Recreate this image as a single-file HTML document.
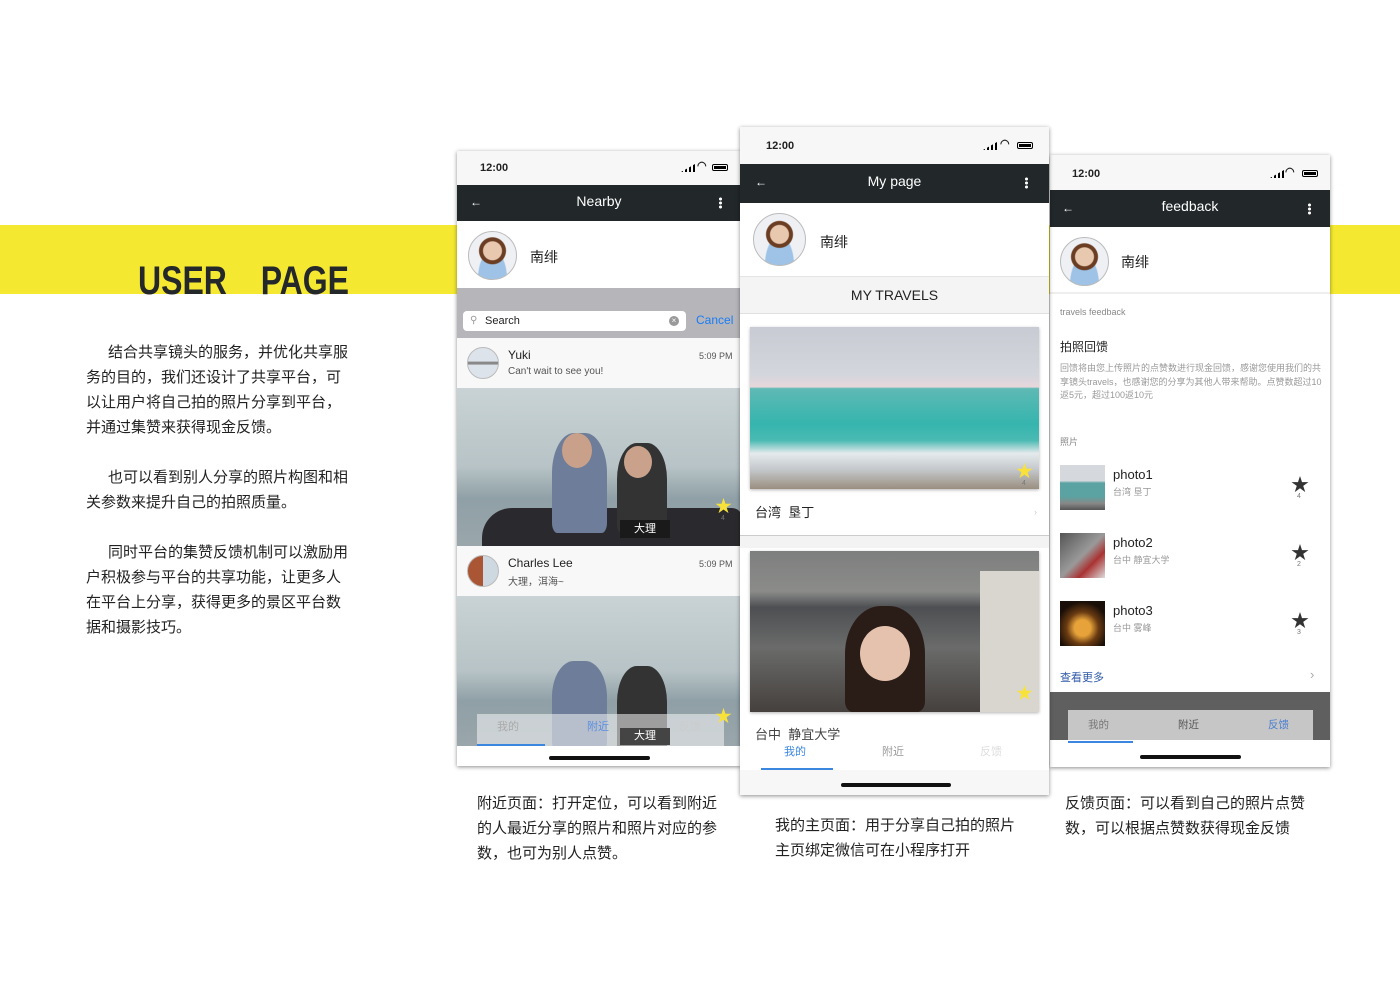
<!DOCTYPE html>
<html><head><meta charset="utf-8"><style>
*{margin:0;padding:0;box-sizing:border-box}
body{width:1400px;height:990px;background:#fff;position:relative;overflow:hidden;font-family:"Liberation Sans","Noto Sans CJK SC",sans-serif;color:#222}
.a{position:absolute}
.band{left:0;top:225px;width:1400px;height:69px;background:#f4e930}
.title{left:138px;top:259px;font:bold 40px "Liberation Sans",sans-serif;color:#25282b;white-space:nowrap;word-spacing:10px;transform:scaleX(0.8);transform-origin:left}
.intro{left:86px;width:263px;font-size:15px;line-height:25px;color:#222}
.intro p{text-indent:22px;margin-bottom:25px}
.cap{font-size:15px;line-height:25px;color:#222}
.phone{background:#fff;box-shadow:0 1px 4px rgba(0,0,0,.45);overflow:hidden}
.sb{left:0;width:100%;background:#f7f7f7;font-weight:bold;font-size:11px}
.nav{left:0;width:100%;background:#22272a;color:#fff;font-size:14px;text-align:center}
.dots{width:3px;height:12px;background:radial-gradient(circle,#fff 1.4px,transparent 1.6px) 0 0/3px 4px}
.av{border-radius:50%;border:1px solid #bbb;background:radial-gradient(circle at 50% 40%,#e8c9b0 0 9px,#6b3d22 10px 13px,transparent 14px),radial-gradient(ellipse at 50% 100%,#9ec3e6 0 14px,transparent 15px),#eef0f4}
.star{color:#f8e23a;font-size:17px;line-height:17px}
.bstar{color:#333;font-size:18px}
.small{font-size:7px;color:#777}
.bars{width:14px;height:8px;background:linear-gradient(90deg,#000 0 2px,transparent 2px 4px,#000 4px 6px,transparent 6px 8px,#000 8px 10px,transparent 10px 12px,#000 12px 14px);clip-path:polygon(0 100%,100% 0,100% 100%)}
.bat{width:16px;height:7px;border:1px solid #000;border-radius:2px;background:#000;background-clip:content-box;padding:1px}
.hb{height:4px;background:#111;border-radius:2px}
.photo{background:linear-gradient(180deg,#c9d3d5 0%,#b7c3c6 50%,#8fa0a6 70%,#9aa6ab 100%)}
</style></head><body>
<div class="a band"></div>
<div class="a title">USER &nbsp;PAGE</div>
<div class="a intro" style="top:340px">
<p>结合共享镜头的服务，并优化共享服务的目的，我们还设计了共享平台，可以让用户将自己拍的照片分享到平台，并通过集赞来获得现金反馈。</p>
<p>也可以看到别人分享的照片构图和相关参数来提升自己的拍照质量。</p>
<p>同时平台的集赞反馈机制可以激励用户积极参与平台的共享功能，让更多人在平台上分享，获得更多的景区平台数据和摄影技巧。</p>
</div>

<!-- Phone 1 -->
<div class="a phone" style="left:457px;top:151px;width:284px;height:615px">
 <div class="a sb" style="top:0;height:34px"><span class="a" style="left:23px;top:11px">12:00</span><div class="a bars" style="left:224px;top:13px"></div><span class="a" style="left:240px;top:8px;font-size:11px">&#x25E0;</span><div class="a bat" style="left:255px;top:13px"></div></div>
 <div class="a nav" style="top:34px;height:36px;line-height:32px">Nearby<span class="a" style="left:13px;top:1px;font-size:12px">&#8592;</span><div class="a dots" style="left:262px;top:12px"></div></div>
 <div class="a av" style="left:11px;top:80px;width:49px;height:49px"></div>
 <div class="a" style="left:73px;top:96px;font-size:14px">南绯</div>
 <div class="a" style="left:0;top:137px;width:284px;height:50px;background:#b6b6ba"></div>
 <div class="a" style="left:6px;top:160px;width:223px;height:20px;background:#fff;border-radius:4px;font-size:11px;line-height:20px;padding-left:22px">Search<span class="a" style="left:7px;top:0;color:#999;font-size:10px">&#9906;</span><span class="a" style="left:206px;top:5px;width:10px;height:10px;border-radius:50%;background:#999;color:#fff;font-size:8px;line-height:10px;text-align:center">×</span></div>
 <div class="a" style="left:239px;top:162px;font-size:12px;color:#1a7cf5">Cancel</div>
 <div class="a" style="left:0;top:187px;width:284px;height:50px;background:#f8f8f8"></div>
 <div class="a av" style="left:10px;top:196px;width:32px;height:32px;background:linear-gradient(#dde3ea 45%,#888 46% 55%,#dde3ea 56%)"></div>
 <div class="a" style="left:51px;top:197px;font-size:12px">Yuki</div>
 <div class="a" style="left:51px;top:215px;font-size:10px;color:#555">Can't wait to see you!</div>
 <div class="a" style="left:242px;top:200px;font-size:9px;color:#555">5:09 PM</div>
 <div class="a photo" style="left:0;top:237px;width:284px;height:158px"><div class="a" style="left:25px;top:120px;width:260px;height:38px;background:#2a2a2e;border-radius:30px 10px 0 0"></div><div class="a" style="left:95px;top:45px;width:55px;height:100px;background:#6d7d9a;border-radius:40% 40% 10% 10%"></div><div class="a" style="left:160px;top:55px;width:50px;height:90px;background:#333;border-radius:40% 40% 10% 10%"></div><div class="a" style="left:105px;top:45px;width:30px;height:35px;background:#c9a08a;border-radius:50%"></div><div class="a" style="left:167px;top:58px;width:28px;height:32px;background:#caa28c;border-radius:50%"></div></div>
 <div class="a" style="left:163px;top:369px;width:50px;height:18px;background:#1a1a1a;color:#fff;font-size:11px;line-height:18px;text-align:center">大理</div>
 <div class="a star" style="left:258px;top:347px">★</div><div class="a small" style="left:264px;top:364px">4</div>
 <div class="a" style="left:0;top:395px;width:284px;height:50px;background:#f8f8f8"></div>
 <div class="a av" style="left:10px;top:404px;width:32px;height:32px;background:linear-gradient(90deg,#a53 0 50%,#cdd8e0 50%)"></div>
 <div class="a" style="left:51px;top:405px;font-size:12px">Charles Lee</div>
 <div class="a" style="left:51px;top:422px;font-size:10px;color:#555">大理，洱海~</div>
 <div class="a" style="left:242px;top:408px;font-size:9px;color:#555">5:09 PM</div>
 <div class="a photo" style="left:0;top:445px;width:284px;height:150px"><div class="a" style="left:95px;top:65px;width:55px;height:90px;background:#6d7d9a;border-radius:40% 40% 10% 10%"></div><div class="a" style="left:160px;top:70px;width:50px;height:90px;background:#333;border-radius:40% 40% 10% 10%"></div></div>
 <div class="a" style="left:20px;top:563px;width:247px;height:32px;background:rgba(245,245,245,.55);font-size:11px;line-height:26px"><span class="a" style="left:20px;color:#aaa">我的</span><span class="a" style="left:110px;color:#5a8fe0">附近</span><span class="a" style="left:202px;color:#ccc">反馈</span><div class="a" style="left:0;bottom:0;width:68px;height:2px;background:#3b87e0"></div></div>
 <div class="a" style="left:163px;top:577px;width:50px;height:17px;background:#444;color:#fff;font-size:11px;line-height:17px;text-align:center">大理</div>
 <div class="a star" style="left:258px;top:557px">★</div>
 <div class="a" style="left:0;top:595px;width:284px;height:20px;background:#fff"></div>
 <div class="a hb" style="left:92px;top:605px;width:101px"></div>
</div>

<!-- Phone 2 -->
<div class="a phone" style="left:740px;top:127px;width:309px;height:668px;z-index:2">
 <div class="a sb" style="top:0;height:37px"><span class="a" style="left:26px;top:13px">12:00</span><div class="a bars" style="left:243px;top:15px"></div><span class="a" style="left:260px;top:10px">&#x25E0;</span><div class="a bat" style="left:277px;top:15px"></div></div>
 <div class="a nav" style="top:37px;height:39px;line-height:34px">My page<span class="a" style="left:15px;top:1px;font-size:12px">&#8592;</span><div class="a dots" style="left:285px;top:13px"></div></div>
 <div class="a av" style="left:13px;top:86px;width:53px;height:53px"></div>
 <div class="a" style="left:80px;top:105px;font-size:14px">南绯</div>
 <div class="a" style="left:0;top:149px;width:309px;height:38px;background:#f4f4f4;border-top:1px solid #e4e4e4;border-bottom:1px solid #e0e0e0;text-align:center;font-size:14px;line-height:36px">MY TRAVELS</div>
 <div class="a" style="left:10px;top:200px;width:289px;height:162px;background:linear-gradient(180deg,#c8cbd3 0%,#d4d6dd 30%,#e8d7db 37%,#5fb9b4 38%,#35b5ae 60%,#4bbab3 70%,#e5eaed 78%,#c4c8cb 88%,#9a8e80 100%);box-shadow:0 1px 3px rgba(0,0,0,.3)"></div>
 <div class="a star" style="left:276px;top:336px">★</div><div class="a small" style="left:282px;top:353px">4</div>
 <div class="a" style="left:0;top:362px;width:309px;height:47px;border-bottom:1px solid #ccc;font-size:13px;line-height:47px;padding-left:15px">台湾&nbsp;&nbsp;垦丁<span class="a" style="right:12px;top:0;color:#ccc;font-size:9px">›</span></div>
 <div class="a" style="left:0;top:409px;width:309px;height:12px;background:#f3f3f3"></div>
 <div class="a" style="left:10px;top:424px;width:289px;height:161px;background:linear-gradient(180deg,#7d7f7e 0%,#8b8c8a 25%,#4d4f52 35%,#6a6b6a 60%,#45403d 100%);box-shadow:0 1px 3px rgba(0,0,0,.3)"><div class="a" style="left:95px;top:55px;width:80px;height:106px;background:#2a1c17;border-radius:45% 45% 10% 10%"></div><div class="a" style="left:110px;top:75px;width:50px;height:55px;background:#e5c2ae;border-radius:50%"></div><div class="a" style="left:230px;top:20px;width:59px;height:141px;background:#d9d6d0"></div></div>
 <div class="a star" style="left:276px;top:558px">★</div>
 <div class="a" style="left:0;top:586px;width:309px;height:48px;font-size:13px;line-height:44px;padding-left:15px;color:#444">台中&nbsp;&nbsp;静宜大学</div>
 <div class="a" style="left:0;top:616px;width:309px;height:20px;font-size:11px"><span class="a" style="left:44px;color:#3b87e0">我的</span><span class="a" style="left:142px;color:#999">附近</span><span class="a" style="left:240px;color:#ddd">反馈</span></div>
 <div class="a" style="left:21px;top:641px;width:72px;height:2px;background:#3b87e0"></div>
 <div class="a" style="left:0;top:643px;width:309px;height:25px;background:#f7f7f7"></div>
 <div class="a hb" style="left:101px;top:656px;width:110px"></div>
</div>

<!-- Phone 3 -->
<div class="a phone" style="left:1050px;top:155px;width:280px;height:612px">
 <div class="a sb" style="top:0;height:35px"><span class="a" style="left:22px;top:13px">12:00</span><div class="a bars" style="left:220px;top:15px"></div><span class="a" style="left:235px;top:10px">&#x25E0;</span><div class="a bat" style="left:252px;top:15px"></div></div>
 <div class="a nav" style="top:35px;height:37px;line-height:32px">feedback<span class="a" style="left:12px;top:2px;font-size:12px">&#8592;</span><div class="a dots" style="left:258px;top:13px"></div></div>
 <div class="a av" style="left:10px;top:82px;width:49px;height:49px"></div>
 <div class="a" style="left:71px;top:97px;font-size:14px">南绯</div>
 <div class="a" style="left:0;top:137px;width:280px;height:2px;background:#eee"></div>
 <div class="a" style="left:10px;top:152px;font-size:9px;color:#888">travels feedback</div>
 <div class="a" style="left:10px;top:183px;font-size:12px;color:#222">拍照回馈</div>
 <div class="a" style="left:10px;top:207px;width:262px;font-size:9px;line-height:13.5px;color:#999">回馈将由您上传照片的点赞数进行现金回馈，感谢您使用我们的共享镜头travels，也感谢您的分享为其他人带来帮助。点赞数超过10返5元，超过100返10元</div>
 <div class="a" style="left:10px;top:280px;font-size:9px;color:#888">照片</div>
 <div class="a" style="left:10px;top:310px;width:45px;height:45px;background:linear-gradient(#d5d8dd 0 35%,#5aa3a2 40% 70%,#888 85%,#555)"></div>
 <div class="a" style="left:63px;top:312px;font-size:13px">photo1</div><div class="a" style="left:63px;top:330px;font-size:9px;color:#999">台湾 垦丁</div>
 <div class="a bstar" style="left:241px;top:316px">★</div><div class="a small" style="left:247px;top:338px">4</div>
 <div class="a" style="left:10px;top:378px;width:45px;height:45px;background:linear-gradient(135deg,#555,#9a9a9a 50%,#a33 70%,#ddd)"></div>
 <div class="a" style="left:63px;top:380px;font-size:13px">photo2</div><div class="a" style="left:63px;top:398px;font-size:9px;color:#999">台中 静宜大学</div>
 <div class="a bstar" style="left:241px;top:384px">★</div><div class="a small" style="left:247px;top:406px">2</div>
 <div class="a" style="left:10px;top:446px;width:45px;height:45px;background:radial-gradient(circle at 50% 60%,#e7a33a 0 8px,#6a3b12 16px,#1a0f08 26px)"></div>
 <div class="a" style="left:63px;top:448px;font-size:13px">photo3</div><div class="a" style="left:63px;top:466px;font-size:9px;color:#999">台中 雾峰</div>
 <div class="a bstar" style="left:241px;top:452px">★</div><div class="a small" style="left:247px;top:474px">3</div>
 <div class="a" style="left:10px;top:514px;font-size:11px;color:#2f5aa8">查看更多</div>
 <div class="a" style="left:260px;top:512px;font-size:13px;color:#aaa">›</div>
 <div class="a" style="left:0;top:537px;width:280px;height:48px;background:#5f5f5f"></div>
 <div class="a" style="left:18px;top:555px;width:245px;height:30px;background:#c6c6c6;font-size:10.5px;line-height:30px"><span class="a" style="left:20px;color:#777">我的</span><span class="a" style="left:110px;color:#555">附近</span><span class="a" style="left:200px;color:#4a7fd0">反馈</span></div>
 <div class="a" style="left:18px;top:586px;width:65px;height:2px;background:#3b87e0"></div>
 <div class="a hb" style="left:90px;top:600px;width:101px"></div>
</div>

<div class="a cap" style="left:477px;top:791px;width:250px">附近页面：打开定位，可以看到附近的人最近分享的照片和照片对应的参数，也可为别人点赞。</div>
<div class="a cap" style="left:775px;top:813px;width:250px">我的主页面：用于分享自己拍的照片主页绑定微信可在小程序打开</div>
<div class="a cap" style="left:1065px;top:791px;width:250px">反馈页面：可以看到自己的照片点赞数，可以根据点赞数获得现金反馈</div>
</body></html>
